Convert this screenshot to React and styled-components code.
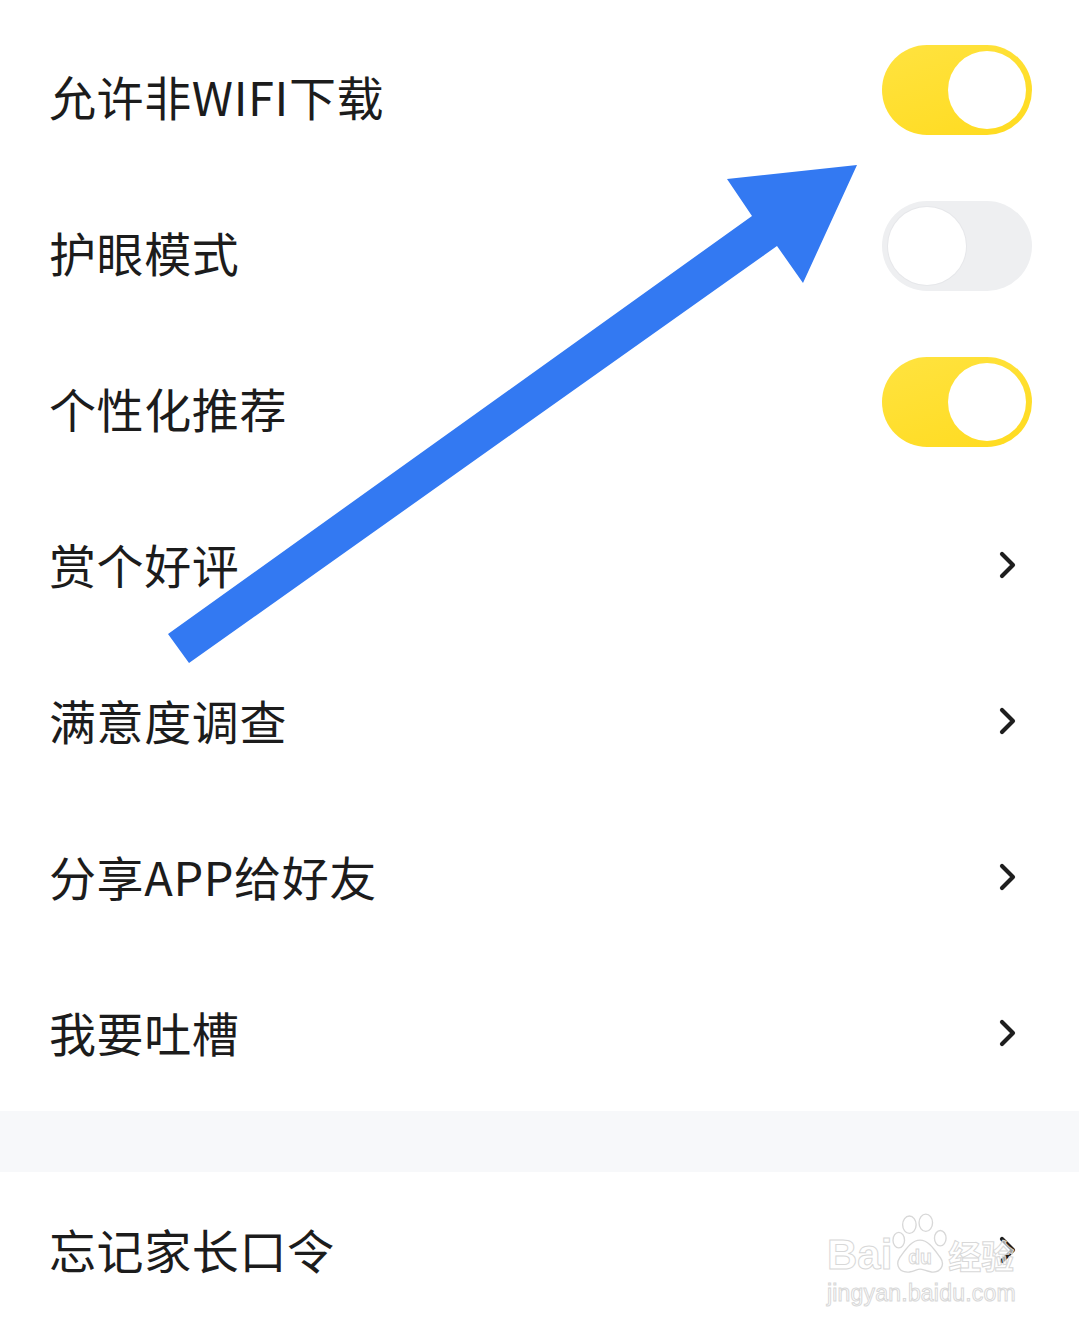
import styled, { createGlobalStyle } from 'styled-components'

const GlobalStyle = createGlobalStyle`
  * {
    box-sizing: border-box;
  }
  body {
    margin: 0;
    background: #fff;
    font-family: "Noto Sans CJK SC", "Noto Sans", sans-serif;
  }
`

const Page = styled.div`
  position: relative;
  width: 1079px;
  height: 1329px;
  overflow: hidden;
  background: #fff;
  padding-top: 19px;
`

const Group = styled.div`
  display: flex;
  flex-direction: column;
`

const Row = styled.div`
  display: flex;
  align-items: center;
  justify-content: space-between;
  height: 156px;
  padding: 0 47px 0 49px;
`

const Label = styled.span`
  font-size: 47px;
  color: #1c1c1c;
  letter-spacing: 0.6px;
  margin-bottom: 4px;
`

const Gap = styled.div`
  height: 61px;
  background: #f7f8fa;
`

const Track = styled.div`
  display: flex;
  align-items: center;
  justify-content: ${(p) => (p.on ? 'flex-end' : 'flex-start')};
  width: 150px;
  height: 90px;
  margin-bottom: 14px;
  padding: 6px;
  border-radius: 45px;
  background: ${(p) =>
    p.on ? 'linear-gradient(160deg, #ffe340, #ffdb1f)' : '#eeeff1'};
`

const Knob = styled.div`
  width: 78px;
  height: 78px;
  border-radius: 50%;
  background: #fff;
  box-shadow: ${(p) => (p.on ? 'none' : '0 0 0 1px #e6e7ea')};
`

const Chevron = styled.svg`
  width: 18px;
  height: 28px;
  margin-right: 15px;
`

const Arrow = styled.svg`
  position: absolute;
  left: 0;
  top: 0;
  width: 1079px;
  height: 1329px;
  pointer-events: none;
`

const Watermark = styled.div`
  position: absolute;
  left: 827px;
  top: 1210px;
  display: flex;
  flex-direction: column;
  align-items: flex-start;
  font-family: "Liberation Sans", "Noto Sans CJK SC", sans-serif;
  color: rgba(255, 255, 255, 0.6);
  -webkit-text-stroke: 1px #d8d8d8;
`

const MarkTop = styled.div`
  display: flex;
  align-items: flex-end;
  height: 66px;
  font-size: ${(p) => p.size || 42}px;
  font-weight: bold;
  line-height: 1;
`

const MarkCn = styled.span`
  font-size: 33px;
  margin-bottom: 2px;
`

const MarkUrl = styled.div`
  margin-top: 6px;
  font-size: 23px;
  letter-spacing: 0.2px;
  line-height: 1;
`

const Toggle = ({ on }) => (
  <Track on={on ? 1 : 0}>
    <Knob on={on ? 1 : 0} />
  </Track>
)

const Arrowhead = () => (
  <Chevron viewBox="0 0 18 28">
    <path
      d="M3 3 L14 14 L3 25"
      fill="none"
      stroke="#1e1e1e"
      strokeWidth="4.2"
      strokeLinecap="round"
      strokeLinejoin="round"
    />
  </Chevron>
)

const Paw = () => (
  <svg width="56" height="64" viewBox="0 0 58 64">
    <g fill="#fff" stroke="#d8d8d8" strokeWidth="1.4">
      <ellipse cx="18" cy="12" rx="7" ry="9" />
      <ellipse cx="35" cy="10" rx="7" ry="9" />
      <ellipse cx="7" cy="28" rx="6" ry="8" />
      <ellipse cx="50" cy="26" rx="6" ry="8" />
      <path d="M29 28 C20 28 14 38 8 46 C3 54 8 62 18 61 C24 60 26 58 29 58 C32 58 35 60 41 61 C51 62 55 53 50 46 C44 38 38 28 29 28 Z" />
    </g>
    <text
      x="29"
      y="53"
      textAnchor="middle"
      fontFamily="Liberation Sans, sans-serif"
      fontWeight="bold"
      fontSize="20"
      fill="#fff"
      stroke="#d8d8d8"
      strokeWidth="1"
    >
      du
    </text>
  </svg>
)

const switches = [
  { label: '允许非WIFI下载', on: true },
  { label: '护眼模式', on: false },
  { label: '个性化推荐', on: true },
]

const links = ['赏个好评', '满意度调查', '分享APP给好友', '我要吐槽']

const App = () => (
  <>
    <GlobalStyle />
    <Page>
      <Group>
        {switches.map((s) => (
          <Row key={s.label}>
            <Label>{s.label}</Label>
            <Toggle on={s.on} />
          </Row>
        ))}
        {links.map((l) => (
          <Row key={l}>
            <Label>{l}</Label>
            <Arrowhead />
          </Row>
        ))}
      </Group>
      <Gap />
      <Group>
        <Row>
          <Label>忘记家长口令</Label>
          <Arrowhead />
        </Row>
      </Group>

      <Arrow viewBox="0 0 1079 1329">
        <polygon
          points="168,634 189,663 777,246 803,283 857,165 727,179 752,216"
          fill="#3379f2"
        />
      </Arrow>

      <Watermark>
        <MarkTop>
          <span>Bai</span>
          <Paw />
          <MarkCn>经验</MarkCn>
        </MarkTop>
        <MarkUrl>jingyan.baidu.com</MarkUrl>
      </Watermark>
    </Page>
  </>
)

export default App
